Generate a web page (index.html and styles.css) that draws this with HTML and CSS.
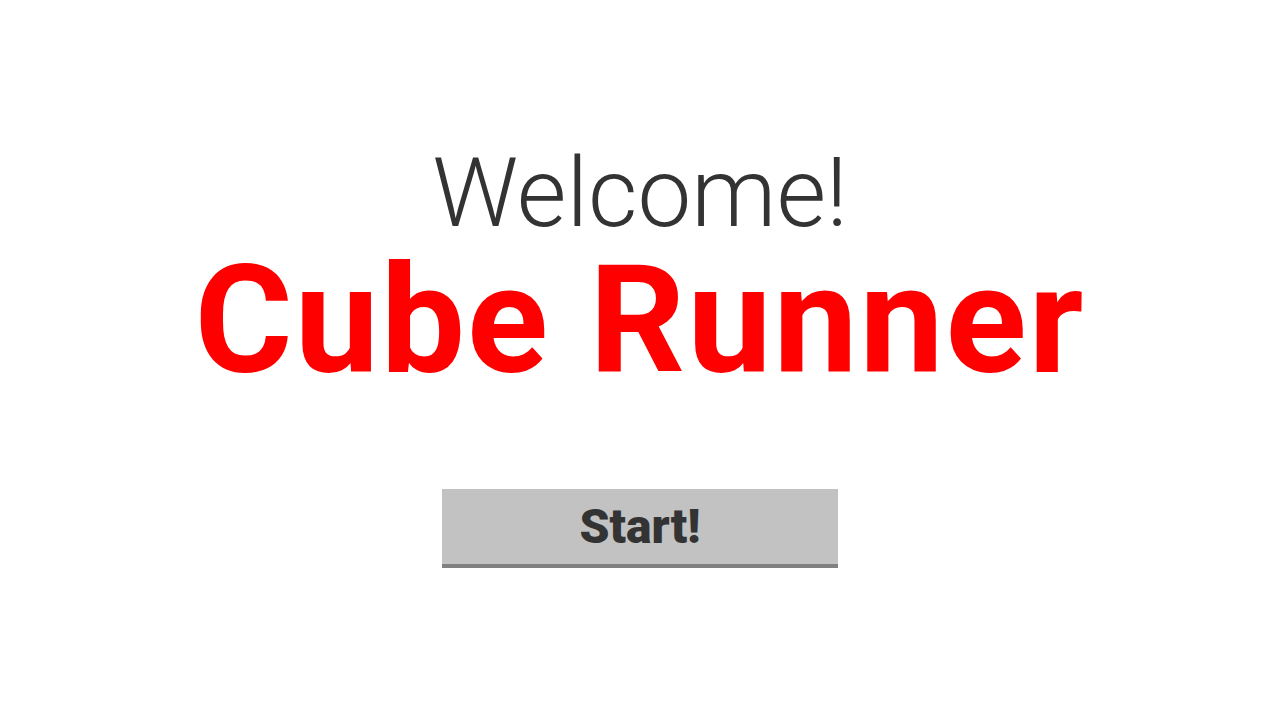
FILE: index.html
```html
<!DOCTYPE html>
<html>
<head>
<meta charset="utf-8">
<link rel="stylesheet" href="styles.css">
</head>
<body>
<main class="screen">
  <h2 class="welcome">Welcome!</h2>
  <h1 class="title">Cube Runner</h1>
  <button class="start">Start!</button>
</main>
</body>
</html>
```
FILE: styles.css
```css
html, body {
  margin: 0;
  padding: 0;
  background: #ffffff;
  font-family: Roboto, "Liberation Sans", sans-serif;
}
.screen {
  width: 1280px;
  height: 720px;
  display: flex;
  flex-direction: column;
  align-items: center;
  box-sizing: border-box;
  padding-top: 143px;
}
.welcome {
  margin: 0;
  font-weight: 300;
  font-size: 96px;
  line-height: 100px;
  color: #333333;
}
.title {
  margin: 0;
  font-weight: 700;
  font-size: 150px;
  line-height: 156px;
  letter-spacing: 2px;
  color: #ff0000;
}
.start {
  margin-top: 90px;
  width: 396px;
  height: 79px;
  border: none;
  border-bottom: 4px solid #808080;
  background: #c2c2c2;
  font-family: Roboto, "Liberation Sans", sans-serif;
  font-weight: 900;
  font-size: 48px;
  color: #333333;
  padding: 0;
  box-sizing: border-box;
}
```
